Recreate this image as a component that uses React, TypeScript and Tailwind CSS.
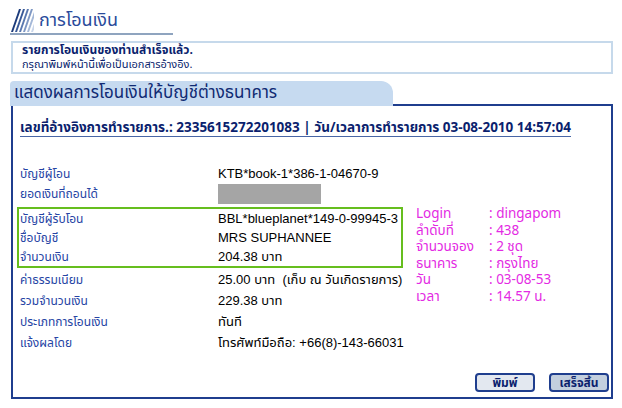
function Stripes() {
  const colors = ['#1d3c7c', '#3a5a98', '#5b79b0', '#7f98c4', '#a4b8d8', '#c9d6ea'];
  return (
    <svg width="23" height="23" viewBox="0 0 23 23" className="shrink-0">
      {colors.map((c, i) => {
        const x = i * 4;
        return <polygon key={i} points={`${x},23 ${x + 2},23 ${x + 10},0 ${x + 8},0`} fill={c} />;
      })}
    </svg>
  );
}

const TOP_ROWS = [
  ['บัญชีผู้โอน', 'KTB*book-1*386-1-04670-9'],
];

const GREEN_ROWS = [
  ['บัญชีผู้รับโอน', 'BBL*blueplanet*149-0-99945-3'],
  ['ชื่อบัญชี', 'MRS SUPHANNEE'],
  ['จำนวนเงิน', '204.38 บาท'],
];

const BOTTOM_ROWS = [
  ['ค่าธรรมเนียม', '25.00 บาท  (เก็บ ณ วันเกิดรายการ)'],
  ['รวมจำนวนเงิน', '229.38 บาท'],
  ['ประเภทการโอนเงิน', 'ทันที'],
  ['แจ้งผลโดย', 'โทรศัพท์มือถือ: +66(8)-143-66031'],
];

const INFO = [
  ['Login', ': dingapom'],
  ['ลำดับที่', ': 438'],
  ['จำนวนจอง', ': 2 ชุด'],
  ['ธนาคาร', ': กรุงไทย'],
  ['วัน', ': 03-08-53'],
  ['เวลา', ': 14.57 น.'],
];

function Row({ label, value, h }: { label: string; value: React.ReactNode; h: string }) {
  return (
    <div className={`flex items-center ${h}`}>
      <span className="w-[198px] shrink-0 text-[12px] leading-[16px] text-[#2644a4]">{label}</span>
      <span className="text-[13px] leading-[16px] text-black whitespace-pre font-['Liberation_Sans','Noto_Sans_Thai',sans-serif]">
        {value}
      </span>
    </div>
  );
}

export default function App() {
  return (
    <div className="w-[622px] h-[408px] bg-white px-[10px] pt-[9px] font-[Tahoma,'Noto_Sans_Thai','Noto_Sans',sans-serif]">
      {/* Header */}
      <div className="w-[163px] border-b-2 border-[#8fa4bf] flex items-end gap-[5px] pl-[1px] pb-[1px]">
        <Stripes />
        <span className="text-[18px] leading-[22px] text-[#2a4b9b]">การโอนเงิน</span>
      </div>

      {/* Success message */}
      <div className="mt-[6px] ml-[1px] w-[602px] h-[33px] border-2 border-[#c6d9eb] pl-[9px]">
        <p className="text-[12px] leading-[15px] font-bold text-[#0b1f6e]">รายการโอนเงินของท่านสำเร็จแล้ว.</p>
        <p className="text-[11px] leading-[14px] text-[#0b1f6e]">กรุณาพิมพ์หน้านี้เพื่อเป็นเอกสารอ้างอิง.</p>
      </div>

      {/* Tab + panel */}
      <div className="mt-[7px]">
        <div className="relative z-10 -mb-[2px] w-[383px] h-[25px] bg-[#c6daf0] rounded-tl-[4px] rounded-tr-[12px] pl-[4px] flex items-center">
          <span className="text-[17px] text-[#102a73]">แสดงผลการโอนเงินให้บัญชีต่างธนาคาร</span>
        </div>
        <div className="ml-[1px] w-[602px] h-[295px] border-2 border-[#1f3e8e] pl-[7px] pr-[2px] flex flex-col">
          <div className="mt-[14px] self-start border-b border-[#4866a6] text-[13.5px] leading-[16px] font-bold text-[#0b1f6e]">
            เลขที่อ้างอิงการทำรายการ.: 2335615272201083 | วัน/เวลาการทำรายการ 03-08-2010 14:57:04
          </div>

          <div className="mt-[27px] flex items-start">
            <div className="w-[386px] shrink-0">
              {TOP_ROWS.map(([l, v]) => (
                <Row key={l} label={l} value={v} h="h-[20px]" />
              ))}
              <Row label="ยอดเงินที่ถอนได้" value={<span className="block w-[103px] h-[20px] bg-[#a5a5a5]" />} h="h-[20px]" />
              <div className="mt-[3px] -ml-[3px] w-[386px] border-2 border-[#66be1e] pl-[1px]">
                {GREEN_ROWS.map(([l, v]) => (
                  <Row key={l} label={l} value={v} h="h-[19px]" />
                ))}
              </div>
              <div className="mt-[1px]">
                {BOTTOM_ROWS.map(([l, v]) => (
                  <Row key={l} label={l} value={v} h="h-[21px]" />
                ))}
              </div>
            </div>

            <div className="mt-[42px] ml-[10px] grid grid-cols-[73px_auto] text-[13.5px] leading-[16.6px] text-[#e32ae3]">
              {INFO.map(([l, v]) => (
                <div key={l} className="contents">
                  <span>{l}</span>
                  <span>{v}</span>
                </div>
              ))}
            </div>
          </div>

          <div className="mt-auto mb-[5px] flex justify-end gap-[14px]">
            <button className="w-[60px] h-[19px] rounded-[4px] border-2 border-[#1f3e8e] bg-[#e3e8f0] text-[12px] leading-none font-bold text-[#0b1f6e]">
              พิมพ์
            </button>
            <button className="w-[60px] h-[19px] rounded-[4px] border-2 border-[#1f3e8e] bg-[#c3cfde] text-[12px] leading-none font-bold text-[#0b1f6e]">
              เสร็จสิ้น
            </button>
          </div>
        </div>
      </div>
    </div>
  );
}
